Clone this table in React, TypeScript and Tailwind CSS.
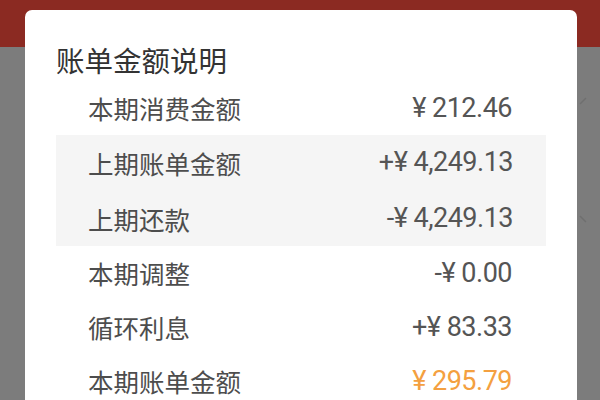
const rows = [
  { label: '本期消费金额', value: '¥ 212.46' },
  { label: '上期账单金额', value: '+¥ 4,249.13', shaded: true },
  { label: '上期还款', value: '-¥ 4,249.13', shaded: true },
  { label: '本期调整', value: '-¥ 0.00' },
  { label: '循环利息', value: '+¥ 83.33' },
  { label: '本期账单金额', value: '¥ 295.79', highlight: true },
];

const cjk = { fontFamily: '"Noto Sans CJK SC", "Noto Sans", sans-serif' };
const num = { fontFamily: 'Roboto, "Noto Sans CJK SC", sans-serif' };

function Row({ label, value, highlight, inset }: { label: string; value: string; highlight?: boolean; inset?: boolean }) {
  return (
    <div
      className={`flex items-center justify-between ${
        inset ? 'h-[55.5px] pl-[32px] pr-[33px]' : 'h-[54px] pl-[63px] pr-[65px]'
      }`}
    >
      <span className="text-[25.5px] leading-none text-[#4d4d4d]" style={cjk}>
        {label}
      </span>
      <span
        className={`text-[27px] leading-none tracking-[-0.5px] ${highlight ? 'text-[#f4a040]' : 'text-[#555555]'}`}
        style={num}
      >
        {value}
      </span>
    </div>
  );
}

export default function App() {
  const top = rows.slice(0, 1);
  const shaded = rows.filter((r) => r.shaded);
  const rest = rows.slice(3);

  return (
    <div className="relative w-[600px] h-[400px] overflow-hidden bg-[#7c7c7c]">
      {/* page behind the dimmed overlay */}
      <div className="h-[47px] bg-[#8b2a22]" />
      <svg className="absolute left-[578px] top-[90px]" width="12" height="150" viewBox="0 0 12 150">
        <path d="M2 14 L8 8" stroke="#6f6f6f" strokeWidth="1.5" fill="none" />
        <path d="M2 126 L8 132" stroke="#6f6f6f" strokeWidth="1.5" fill="none" />
      </svg>

      {/* dialog */}
      <div className="absolute left-[25px] top-[10px] w-[552px] h-[420px] rounded-[7px] bg-white pt-[30px]">
        <div className="h-[41px] pl-[31px] flex items-center text-[28.5px] leading-none text-[#333333]" style={cjk}>
          账单金额说明
        </div>
        {top.map((r) => (
          <Row key={r.label} label={r.label} value={r.value} />
        ))}
        <div className="mx-[31px] bg-[#f5f5f5]">
          {shaded.map((r) => (
            <Row key={r.label} label={r.label} value={r.value} inset />
          ))}
        </div>
        {rest.map((r) => (
          <Row key={r.label} label={r.label} value={r.value} highlight={r.highlight} />
        ))}
      </div>
    </div>
  );
}
